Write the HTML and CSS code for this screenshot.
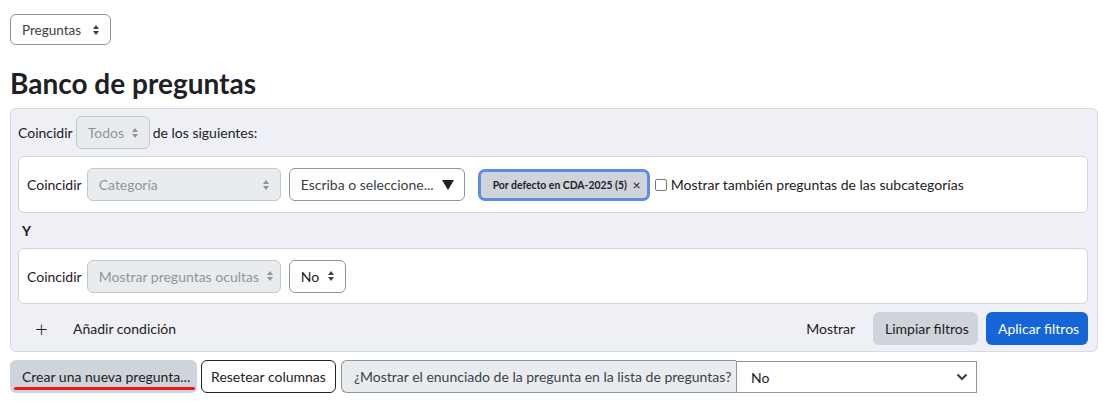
FILE: index.html
```html
<!DOCTYPE html>
<html lang="es">
<head>
<meta charset="utf-8">
<title>Banco de preguntas</title>
<link rel="stylesheet" href="styles.css">
</head>
<body>
<div class="page">
  <div class="sel top-sel">Preguntas <span class="updown"></span></div>
  <h2 class="title">Banco de preguntas</h2>
  <div class="panel">
    <div class="row1">
      <span>Coincidir</span>
      <div class="sel dis todos">Todos <span class="updown"></span></div>
      <span>de los siguientes:</span>
    </div>
    <div class="card">
      <span class="lbl">Coincidir</span>
      <div class="sel dis cat">Categoría <span class="updown"></span></div>
      <div class="auto">Escriba o seleccione... <span class="tri"></span></div>
      <div class="badge">Por defecto en CDA-2025 (5) <span class="x">×</span></div>
      <label class="chk"><span class="box"></span>Mostrar también preguntas de las subcategorías</label>
    </div>
    <div class="and">Y</div>
    <div class="card card2">
      <span class="lbl">Coincidir</span>
      <div class="sel dis hid">Mostrar preguntas ocultas <span class="updown"></span></div>
      <div class="sel no">No <span class="updown"></span></div>
    </div>
    <div class="foot">
      <div class="add"><span class="plus">+</span><span>Añadir condición</span></div>
      <div class="actions">
        <span class="show">Mostrar</span>
        <button class="btn grey">Limpiar filtros</button>
        <button class="btn blue">Aplicar filtros</button>
      </div>
    </div>
  </div>
  <div class="bottom">
    <button class="btn grey create">Crear una nueva pregunta...</button>
    <button class="btn outline">Resetear columnas</button>
    <div class="igroup">
      <span class="ilabel">¿Mostrar el enunciado de la pregunta en la lista de preguntas?</span>
      <div class="isel">No <svg class="chev" width="12" height="8" viewBox="0 0 12 8"><path d="M1.5 1.5 L6 6 L10.5 1.5" fill="none" stroke="#3b4148" stroke-width="2.2"/></svg></div>
    </div>
  </div>
</div>
</body>
</html>
```
FILE: styles.css
```css
* { box-sizing: border-box; }
body {
  margin: 0;
  font-family: Lato, "Noto Sans", sans-serif;
  font-size: 14px;
  color: #1d2125;
  background: #fff;
  white-space: nowrap;
}
.page { padding: 14px 10px 0 10px; }
.sel {
  display: inline-flex;
  flex: none;
  align-items: center;
  height: 33px;
  border: 1px solid #8f959e;
  border-radius: 6px;
  background: #fff;
  padding: 0 10px 0 11px;
  font-size: 14px;
  justify-content: space-between;
}
.updown {
  display: inline-block;
  width: 7px;
  height: 10px;
  margin-left: 8px;
  position: relative;
  flex: none;
}
.updown::before, .updown::after {
  content: "";
  position: absolute;
  left: 0;
  border-left: 3.5px solid transparent;
  border-right: 3.5px solid transparent;
}
.updown::before { top: 0; border-bottom: 4px solid #3b4148; }
.updown::after { bottom: 0; border-top: 4px solid #3b4148; }
.dis .updown::before { border-bottom-color: #8f959e; }
.dis .updown::after { border-top-color: #8f959e; }
.top-sel { height: 31px; width: 101px; font-size: 13.5px; color: #3b4148; }
.title {
  font-size: 28px;
  font-weight: 700;
  margin: 21px 0 8px 0;
  line-height: 34px;
}
.panel {
  background: #eef0f5;
  border: 1px solid #d6dae1;
  border-radius: 6px;
  padding: 7px 9px 6px 7px;
  width: 1088px;
}
.row1 { display: flex; align-items: center; gap: 3px; height: 33px; }
.dis { background: #e9ecef; color: #8f959e; border-color: #c2c7ce; }
.todos { width: 74px; }
.card {
  margin-top: 7px;
  background: #fff;
  border: 1px solid #d2d6dd;
  border-radius: 6px;
  height: 57px;
  display: flex;
  align-items: center;
  padding: 0 8px;
}
.card > * { flex: none; }
.card2 { height: 56px; margin-top: 0; }
.lbl { margin-right: 5px; }
.cat { width: 194px; }
.auto {
  margin-left: 8px;
  width: 176px;
  height: 33px;
  border: 1px solid #8f959e;
  border-radius: 6px;
  display: flex;
  align-items: center;
  justify-content: space-between;
  padding: 0 10px 0 11px;
  color: #3b4148;
}
.tri {
  width: 0; height: 0;
  border-left: 6px solid transparent;
  border-right: 6px solid transparent;
  border-top: 10px solid #1d2125;
}
.badge {
  margin-left: 13px;
  height: 32px;
  width: 172px;
  background: #ced4da;
  border: 3px solid #5b8ee0;
  border-radius: 7px;
  display: flex;
  align-items: center;
  justify-content: space-between;
  padding: 0 6px 0 12px;
  font-size: 10.4px;
  font-weight: 700;
}
.x { font-size: 14px; font-weight: 400; }
.chk { display: flex; align-items: center; margin-left: 5px; }
.box {
  width: 12px; height: 12px;
  border: 1px solid #767676;
  border-radius: 2px;
  margin-right: 4px;
  background: #fff;
}
.and { font-weight: 700; height: 35px; line-height: 35px; padding-left: 4px; font-size: 14px; }
.hid { width: 194px; }
.no { width: 57px; margin-left: 8px; }
.foot {
  margin-top: 8px;
  display: flex;
  align-items: center;
  justify-content: space-between;
  height: 33px;
}
.add { display: flex; align-items: center; padding-left: 17px; }
.plus { font-size: 22px; width: 38px; line-height: 1; font-weight: 300; }
.actions { display: flex; align-items: center; }
.show { margin-right: 18px; }
.btn {
  font-family: inherit;
  font-size: 14px;
  height: 33px;
  border: none;
  border-radius: 6px;
  padding: 0 12px;
  color: #1d2125;
  white-space: nowrap;
  flex: none;
}
.grey { background: #ced4da; width: 105px; }
.blue { background: #1565d8; color: #fff; width: 102px; margin-left: 8px; }
.bottom { display: flex; align-items: center; margin-top: 8px; gap: 4px; }
.create { width: 187px; position: relative; padding: 0 12px; text-align: left; }
.create::after {
  content: "";
  position: absolute;
  left: 4px; right: 2px; bottom: 3px;
  height: 3px;
  border-radius: 2px;
  background: #e31b23;
}
.outline { background: #fff; border: 1px solid #1d2125; width: 135px; padding: 0; }
.igroup { display: flex; height: 33px; margin-left: 1px; flex: none; }
.ilabel {
  display: flex; align-items: center;
  background: #e9ecef;
  border: 1px solid #8f959e;
  border-right: none;
  border-radius: 6px 0 0 6px;
  padding: 0 12px;
  width: 395px;
  color: #3b4148;
  flex: none;
}
.isel {
  width: 241px;
  height: 32px;
  margin-top: 1px;
  border: 1px solid #8f959e;
  display: flex; align-items: center; justify-content: space-between;
  padding: 0 8px 0 14px;
  flex: none;
}
```
